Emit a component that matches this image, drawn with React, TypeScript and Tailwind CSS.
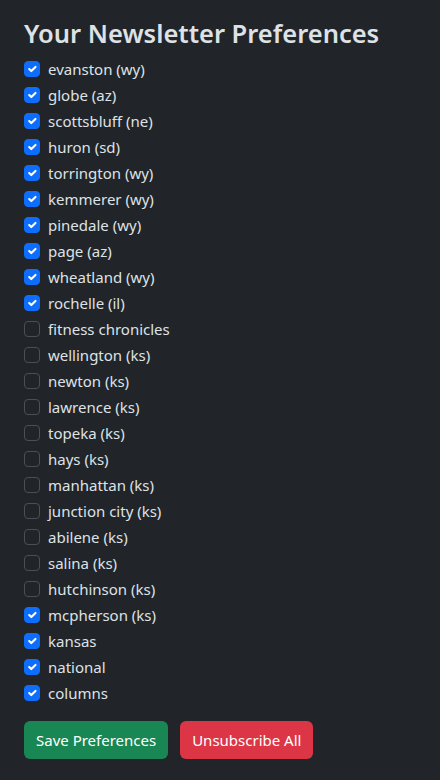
import React, { useState } from "react";

const items: [string, boolean][] = [
  ["evanston (wy)", true],
  ["globe (az)", true],
  ["scottsbluff (ne)", true],
  ["huron (sd)", true],
  ["torrington (wy)", true],
  ["kemmerer (wy)", true],
  ["pinedale (wy)", true],
  ["page (az)", true],
  ["wheatland (wy)", true],
  ["rochelle (il)", true],
  ["fitness chronicles", false],
  ["wellington (ks)", false],
  ["newton (ks)", false],
  ["lawrence (ks)", false],
  ["topeka (ks)", false],
  ["hays (ks)", false],
  ["manhattan (ks)", false],
  ["junction city (ks)", false],
  ["abilene (ks)", false],
  ["salina (ks)", false],
  ["hutchinson (ks)", false],
  ["mcpherson (ks)", true],
  ["kansas", true],
  ["national", true],
  ["columns", true],
];

function Check({ on }: { on: boolean }) {
  return (
    <span
      className={
        "mt-1 flex size-4 shrink-0 items-center justify-center rounded-[4px] border " +
        (on ? "border-[#0d6efd] bg-[#0d6efd]" : "border-[#495057] bg-[#212529]")
      }
    >
      {on && (
        <svg viewBox="0 0 20 20" className="size-4">
          <path d="m6 10 3 3 6-6" fill="none" stroke="#fff" strokeWidth="3" strokeLinecap="round" strokeLinejoin="round" />
        </svg>
      )}
    </span>
  );
}

export default function App() {
  const [state, setState] = useState(items.map((i) => i[1]));

  return (
    <div className="min-h-[780px] bg-[#212529] px-6 pt-[17px] text-[#dee2e6] font-['Noto_Sans',sans-serif]">
      <h2 className="mb-2 text-[25.5px] font-semibold leading-[32px]">Your Newsletter Preferences</h2>
      <div>
        {items.map(([name], i) => (
          <label
            key={name}
            className="mb-[2px] flex min-h-6 cursor-pointer items-start gap-2 text-[15px] leading-6"
            onClick={() => setState((s) => s.map((v, j) => (j === i ? !v : v)))}
          >
            <Check on={state[i]} />
            <span>{name}</span>
          </label>
        ))}
      </div>
      <div className="mt-4 flex gap-3">
        <button className="h-[38px] rounded-md bg-[#198754] px-3 text-[15px] text-white">Save Preferences</button>
        <button className="h-[38px] rounded-md bg-[#dc3545] px-3 text-[15px] text-white">Unsubscribe All</button>
      </div>
    </div>
  );
}
